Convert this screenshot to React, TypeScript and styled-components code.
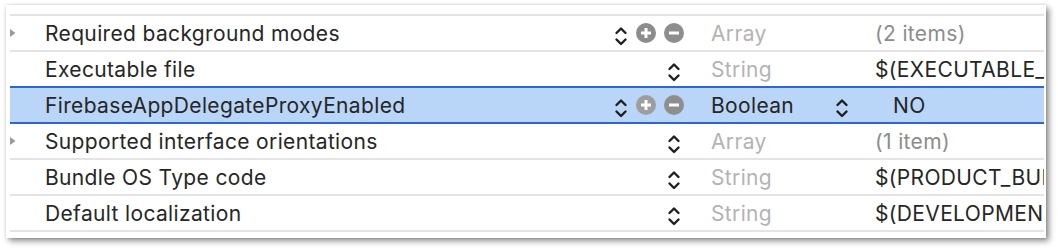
import React from "react";
import styled, { createGlobalStyle } from "styled-components";

const Global = createGlobalStyle`
  html, body { margin: 0; padding: 0; background: #ffffff; }
  body { font-family: Inter, "Liberation Sans", sans-serif; -webkit-font-smoothing: antialiased; }
`;

const Page = styled.div`
  width: 1058px;
  height: 248px;
  padding: 5px 12px 10px 6px;
  box-sizing: border-box;
`;

const Card = styled.div`
  background: #ffffff;
  height: 233px;
  padding: 5px 2px 0 4px;
  box-sizing: border-box;
  box-shadow: 3px 3px 6px rgba(0, 0, 0, 0.45), 0 0 3px rgba(0, 0, 0, 0.12);
`;

const Scroll = styled.div`
  height: 228px;
  overflow: hidden;
`;

const Row = styled.div<{ $selected?: boolean; $partial?: boolean }>`
  display: grid;
  grid-template-columns: 35px 555px 111px 164px 1fr;
  align-items: center;
  height: 34px;
  border-bottom: 2px solid ${(p) => (p.$selected ? "#2c66d8" : "#e4e4e4")};
  background: ${(p) => (p.$selected ? "#b9d5f7" : "transparent")};
  font-size: 21px;
  letter-spacing: 0.35px;
  color: #262626;
  white-space: nowrap;
  ${(p) => (p.$selected ? "margin-top: -2px; border-top: 2px solid #2c66d8;" : "")}
  ${(p) => (p.$partial ? "margin-top: -30px;" : "")}
`;

const Disclosure = styled.div`
  display: flex;
  align-items: center;
  height: 100%;
`;

const KeyText = styled.div`
  overflow: hidden;
`;

const Controls = styled.div`
  display: flex;
  justify-content: flex-end;
  align-items: center;
  gap: 8px;
  padding-right: 27px;
`;

const StepperBox = styled.div<{ $shift?: number }>`
  display: flex;
  margin-top: 5px;
  margin-right: ${(p) => p.$shift ?? 0}px;
`;

const TypeCell = styled.div<{ $muted?: boolean }>`
  display: flex;
  align-items: center;
  color: ${(p) => (p.$muted ? "#b3b3b3" : "#262626")};
`;

const TypePopupLabel = styled.span`
  width: 124px;
`;

const ValueCell = styled.div<{ $muted?: boolean; $indent?: number }>`
  overflow: hidden;
  color: ${(p) => (p.$muted ? "#8c8c8c" : "#262626")};
  padding-left: ${(p) => p.$indent ?? 0}px;
`;

const Stepper = () => (
  <svg width="14" height="24" viewBox="0 0 14 24">
    <polyline points="2.5,9 7,4.5 11.5,9" fill="none" stroke="#1f1f1f" strokeWidth="2.4" strokeLinecap="round" strokeLinejoin="round" />
    <polyline points="2.5,15.5 7,20 11.5,15.5" fill="none" stroke="#1f1f1f" strokeWidth="2.4" strokeLinecap="round" strokeLinejoin="round" />
  </svg>
);

const RoundButton = ({ kind, color }: { kind: "plus" | "minus"; color: string }) => (
  <svg width="20" height="20" viewBox="0 0 20 20">
    <circle cx="10" cy="10" r="10" fill={color} />
    <line x1="5" y1="10" x2="15" y2="10" stroke="#ffffff" strokeWidth="3" />
    {kind === "plus" && <line x1="10" y1="5" x2="10" y2="15" stroke="#ffffff" strokeWidth="3" />}
  </svg>
);

const Triangle = () => (
  <svg width="8" height="10" viewBox="0 0 8 10">
    <polygon points="0,1 5.5,5 0,9" fill="#9a9a9a" />
  </svg>
);

type Item = {
  key: string;
  type: string;
  value: string;
  expandable?: boolean;
  buttons?: boolean;
  selected?: boolean;
  valueMuted?: boolean;
};

const items: Item[] = [
  { key: "Required background modes", type: "Array", value: "(2 items)", expandable: true, buttons: true, valueMuted: true },
  { key: "Executable file", type: "String", value: "$(EXECUTABLE_NAME)" },
  { key: "FirebaseAppDelegateProxyEnabled", type: "Boolean", value: "NO", buttons: true, selected: true },
  { key: "Supported interface orientations", type: "Array", value: "(1 item)", expandable: true, valueMuted: true },
  { key: "Bundle OS Type code", type: "String", value: "$(PRODUCT_BUNDLE_PACKAGE_TYPE)" },
  { key: "Default localization", type: "String", value: "$(DEVELOPMENT_LANGUAGE)" },
];

export default function App() {
  return (
    <>
      <Global />
      <Page>
        <Card>
          <Scroll>
            <Row $partial>
              <Disclosure />
              <KeyText />
              <Controls>
                <StepperBox $shift={3}>
                  <Stepper />
                </StepperBox>
              </Controls>
              <TypeCell $muted />
              <ValueCell />
            </Row>
            {items.map((it) => (
              <Row key={it.key} $selected={it.selected}>
                <Disclosure>{it.expandable && <Triangle />}</Disclosure>
                <KeyText>{it.key}</KeyText>
                <Controls>
                  <StepperBox $shift={it.buttons ? 0 : 3}>
                    <Stepper />
                  </StepperBox>
                  {it.buttons && (
                    <>
                      <RoundButton kind="plus" color={it.selected ? "#9e9e9e" : "#8c8c8c"} />
                      <RoundButton kind="minus" color="#8e8e8e" />
                    </>
                  )}
                </Controls>
                <TypeCell $muted={!it.selected}>
                  {it.selected ? (
                    <>
                      <TypePopupLabel>{it.type}</TypePopupLabel>
                      <StepperBox>
                        <Stepper />
                      </StepperBox>
                    </>
                  ) : (
                    it.type
                  )}
                </TypeCell>
                <ValueCell $muted={it.valueMuted} $indent={it.selected ? 18 : 0}>
                  {it.value}
                </ValueCell>
              </Row>
            ))}
          </Scroll>
        </Card>
      </Page>
    </>
  );
}
